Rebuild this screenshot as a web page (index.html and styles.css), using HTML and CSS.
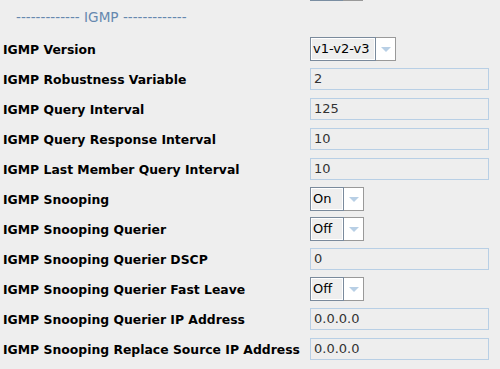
FILE: index.html
```
<!DOCTYPE html>
<html lang="en">
<head>
  <meta charset="UTF-8" />
  <title>IGMP Settings</title>
  <link rel="stylesheet" href="styles.css">
</head>
<body>
  <div class="edge"><span class="edge-dark"></span><span class="edge-light"></span></div>
  <div class="section-title">------------- IGMP -------------</div>
  <div class="form">
    <label>IGMP Version</label>
    <div class="combo wide"><span class="combo-text">v1-v2-v3</span><span class="combo-btn"><i></i></span></div>

    <label>IGMP Robustness Variable</label>
    <div class="field">2</div>

    <label>IGMP Query Interval</label>
    <div class="field">125</div>

    <label>IGMP Query Response Interval</label>
    <div class="field">10</div>

    <label>IGMP Last Member Query Interval</label>
    <div class="field">10</div>

    <label>IGMP Snooping</label>
    <div class="combo"><span class="combo-text">On</span><span class="combo-btn"><i></i></span></div>

    <label>IGMP Snooping Querier</label>
    <div class="combo"><span class="combo-text">Off</span><span class="combo-btn"><i></i></span></div>

    <label>IGMP Snooping Querier DSCP</label>
    <div class="field">0</div>

    <label>IGMP Snooping Querier Fast Leave</label>
    <div class="combo"><span class="combo-text">Off</span><span class="combo-btn"><i></i></span></div>

    <label>IGMP Snooping Querier IP Address</label>
    <div class="field">0.0.0.0</div>

    <label>IGMP Snooping Replace Source IP Address</label>
    <div class="field">0.0.0.0</div>
  </div>
</body>
</html>
```
FILE: styles.css
```
body {
  margin: 0;
  background: #eeeeee;
  font-family: "DejaVu Sans", sans-serif;
  font-size: 12px;
  color: #000;
  overflow: hidden;
}
.edge {
  display: flex;
  margin-left: 310px;
  height: 1px;
}
.edge-dark {
  width: 33px;
  background: #7a8ea2;
}
.edge-light {
  width: 20px;
  background: #999;
}
.section-title {
  padding-left: 16px;
  height: 36px;
  line-height: 32px;
  color: #6688ae;
  font-size: 13.6px;
}
.form {
  display: grid;
  grid-template-columns: 310px 1fr;
  grid-auto-rows: 24px;
  row-gap: 6px;
  align-items: center;
}
.form label {
  padding-left: 3px;
  font-weight: bold;
  font-size: 12.4px;
  white-space: nowrap;
}
.field {
  box-sizing: border-box;
  width: 179px;
  height: 22px;
  line-height: 20px;
  padding-left: 3px;
  border: 1px solid #b8cfe5;
  color: #333;
  font-size: 13px;
}
.combo {
  display: flex;
  height: 24px;
  width: 54px;
  font-size: 13px;
}
.combo.wide {
  width: 86px;
}
.combo-text {
  box-sizing: border-box;
  flex: 1;
  height: 24px;
  line-height: 22px;
  padding-left: 2px;
  border: 1px solid #7a8a9c;
  box-shadow: inset 1px 1px 0 #fff, inset -1px -1px 0 #fff;
  color: #000;
}
.combo-btn {
  box-sizing: border-box;
  width: 20px;
  height: 24px;
  background: #fff;
  border: 1px solid #999;
  border-left: none;
  display: flex;
  align-items: center;
  justify-content: center;
}
.combo-btn i {
  width: 0;
  height: 0;
  border-left: 5px solid transparent;
  border-right: 5px solid transparent;
  border-top: 5px solid #b8cfe5;
  margin-top: 1px;
}
```
